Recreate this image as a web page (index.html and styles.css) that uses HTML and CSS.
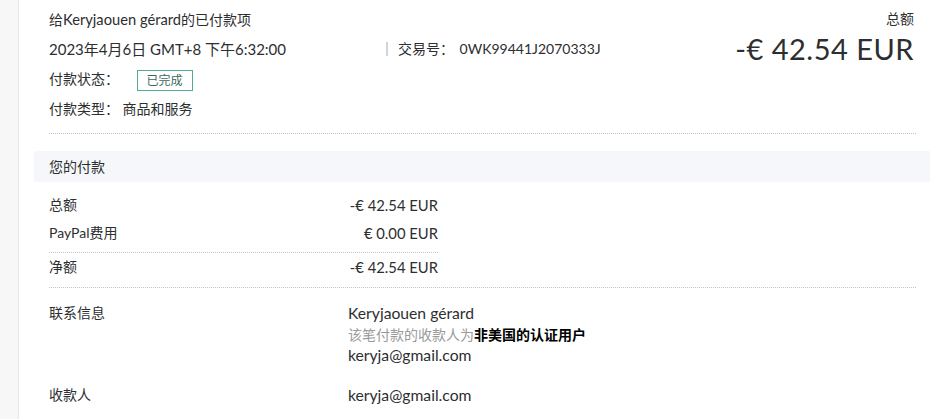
FILE: index.html
```html
<!DOCTYPE html>
<html lang="zh-CN">
<head>
  <meta charset="UTF-8">
  <meta name="viewport" content="width=device-width, initial-scale=1.0">
  <title>交易详情</title>
  <link rel="stylesheet" href="styles.css">
</head>
<body>
  <div class="page">

    <!-- Header -->
    <div class="header">
      <div class="header-left">
        <div class="line">给<span class="en">Keryjaouen gérard</span>的已付款项</div>
        <div class="line date-row">
          <span class="date">2023年4月6日 GMT+8 下午6:32:00</span>
          <span class="txn">交易号： <span class="txn-id">0WK99441J2070333J</span></span>
        </div>
        <div class="line">付款状态： <span class="badge">已完成</span></div>
        <div class="line">付款类型： 商品和服务</div>
      </div>
      <div class="header-right">
        <div class="total-label">总额</div>
        <div class="total-amount">-€ 42.54 EUR</div>
      </div>
    </div>

    <!-- Your payment -->
    <div class="band">您的付款</div>

    <div class="amounts">
      <div class="amount-group">
        <div class="row"><span>总额</span><span class="money">-€ 42.54 EUR</span></div>
        <div class="row"><span>PayPal费用</span><span class="money">€ 0.00 EUR</span></div>
      </div>
      <div class="amount-group">
        <div class="row"><span>净额</span><span class="money">-€ 42.54 EUR</span></div>
      </div>
    </div>

    <!-- Contact -->
    <div class="info">
      <div class="info-row">
        <div class="info-label">联系信息</div>
        <div class="info-value">
          <div class="en-lg">Keryjaouen gérard</div>
          <div class="note">该笔付款的收款人为<b>非美国的认证用户</b></div>
          <div class="en-lg">keryja@gmail.com</div>
        </div>
      </div>
      <div class="info-row">
        <div class="info-label">收款人</div>
        <div class="info-value">
          <div class="en-lg">keryja@gmail.com</div>
        </div>
      </div>
    </div>

  </div>
</body>
</html>
```

FILE: styles.css
```css
/* General */
body {
  margin: 0;
  background: #f7f7f7;
  font-family: Lato, "Noto Sans CJK SC", sans-serif;
  font-size: 14px;
  color: #2c2e2f;
}

.page {
  margin-left: 18px;
  min-height: 100vh;
  background: #fff;
  border-left: 1px solid #e6e6e6;
  overflow: hidden;
}

/* Latin runs are set slightly larger than the CJK text */
.en {
  font-size: 14.7px;
}

.en-lg {
  font-size: 15.7px;
}

/* Header */
.header {
  display: flex;
  justify-content: space-between;
  margin: 4px 16px 0 30px;
  padding-bottom: 9px;
  border-bottom: 1px dotted #c4c4c4;
}

.line {
  height: 30px;
  line-height: 30px;
  white-space: nowrap;
}

.date-row {
  display: flex;
}

.date {
  width: 337px;
  font-size: 15px;
}

.txn {
  border-left: 2px solid #d4d4d4;
  padding-left: 10px;
  line-height: 14px;
  height: 14px;
  margin-top: 8px;
}

.txn-id {
  margin-left: 2px;
}

.badge {
  display: inline-block;
  margin-left: 14px;
  padding: 0 9px;
  height: 19px;
  line-height: 19px;
  font-size: 12px;
  color: #3a6a5d;
  border: 1px solid #4fab92;
  vertical-align: middle;
}

.header-right {
  text-align: right;
  padding-right: 2px;
}

.total-label {
  height: 30px;
  line-height: 30px;
}

.total-amount {
  font-size: 29px;
  line-height: 30px;
  letter-spacing: 0.5px;
}

/* Band */
.band {
  margin: 17px 2px 0 15px;
  height: 31px;
  line-height: 31px;
  padding-left: 15px;
  background: #f5f7fa;
}

/* Amounts */
.amounts {
  margin: 9px 16px 0 30px;
}

.amount-group {
  width: 389px;
  padding-bottom: 5px;
  border-bottom: 1px dotted #c4c4c4;
}

.amount-group:last-child {
  width: auto;
  padding-bottom: 6px;
}

.row {
  display: flex;
  justify-content: space-between;
  width: 389px;
  height: 28px;
  line-height: 28px;
}

.money {
  font-size: 14.8px;
}

/* Contact info */
.info {
  margin: 14px 16px 0 30px;
}

.info-row {
  display: flex;
  margin-bottom: 18px;
}

.info-label {
  width: 299px;
  line-height: 22px;
}

.info-value {
  line-height: 21px;
}

.info-value > div:first-child {
  line-height: 22px;
}

.note {
  color: #9a9a9a;
}

.note b {
  color: #000;
}
```
